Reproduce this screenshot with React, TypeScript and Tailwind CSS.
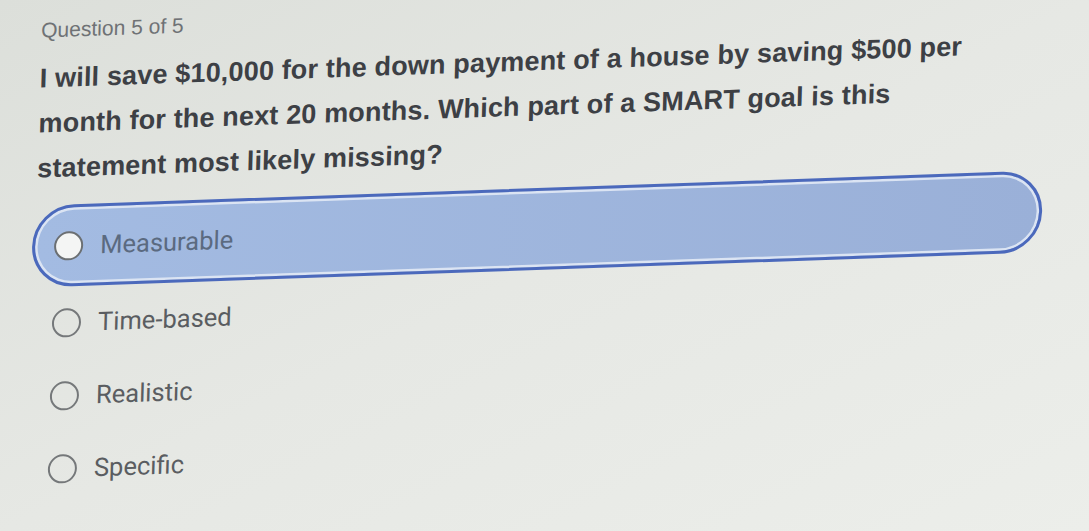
import React from "react";

type Option = { label: string; selected?: boolean };

const options: Option[] = [
  { label: "Measurable", selected: true },
  { label: "Time-based" },
  { label: "Realistic" },
  { label: "Specific" },
];

function Radio({ selected }: { selected?: boolean }) {
  return (
    <span
      className={
        "block h-[29px] w-[29px] shrink-0 rounded-full border-[2.5px] " +
        (selected ? "border-[#6b6f72] bg-[#f4f5f4]" : "border-[#75787a] bg-transparent")
      }
    />
  );
}

export default function App() {
  return (
    <div className="h-[531px] w-full overflow-hidden bg-gradient-to-br from-[#dcdfda] via-[#e6e8e4] to-[#eceeea]">
      <div className="origin-top-left skew-x-[-1.6deg] -skew-y-2 pl-[42px] pt-[19px]">
        <div className="font-['Liberation_Sans',Arial,sans-serif] text-[21px] leading-[25px] text-[#6f7275]">
          Question 5 of 5
        </div>
        <p className="mt-[14px] font-['Liberation_Sans',Arial,sans-serif] text-[27px] font-bold leading-[45px] tracking-[0.15px] text-[#3d4045]">
          <span className="block whitespace-nowrap">
            I will save $10,000 for the down payment of a house by saving $500 per
          </span>
          <span className="block whitespace-nowrap">
            month for the next 20 months. Which part of a SMART goal is this
          </span>
          <span className="block whitespace-nowrap">statement most likely missing?</span>
        </p>

        <ul className="ml-[-3px] mt-[14px] w-[1009px] font-['Roboto',Arial,sans-serif] text-[25.5px] text-[#5a5d61]">
          {options.map((o) =>
            o.selected ? (
              <li
                key={o.label}
                className="flex h-[82px] items-center gap-[17px] rounded-full border-[3.5px] border-[#4b69bc] bg-gradient-to-r from-[#a3bbe2] to-[#9ab0d8] pl-[19px] shadow-[inset_0_0_0_2.5px_#dbe4f3]"
              >
                <Radio selected />
                <span className="text-[#5b6a80]">{o.label}</span>
              </li>
            ) : (
              <li key={o.label} className="flex h-[73px] items-center gap-[17px] pl-[22px]">
                <Radio />
                <span>{o.label}</span>
              </li>
            )
          )}
        </ul>
      </div>
    </div>
  );
}
